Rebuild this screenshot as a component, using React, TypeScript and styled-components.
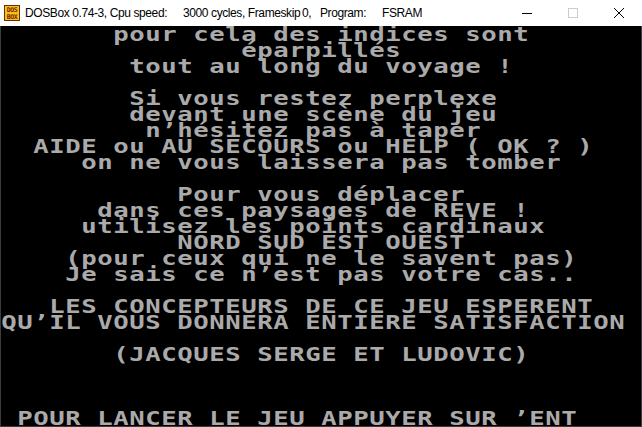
import React from 'react';
import styled, { createGlobalStyle } from 'styled-components';

const GlobalStyle = createGlobalStyle`
  html, body {
    margin: 0;
    padding: 0;
    background: #ffffff;
  }
  body {
    width: 642px;
    height: 427px;
    overflow: hidden;
  }
`;

const Window = styled.div`
  width: 642px;
  height: 427px;
  display: flex;
  flex-direction: column;
  background: #ffffff;
`;

const TitleBar = styled.div`
  height: 26px;
  flex-shrink: 0;
  display: flex;
  align-items: center;
  background: #ffffff;
  font-family: "Liberation Sans", Arial, sans-serif;
  font-size: 12px;
  letter-spacing: -0.4px;
  color: #000000;
`;

const AppIcon = styled.svg`
  flex-shrink: 0;
  margin: 0 5px 0 4px;
`;

const TitleSegment = styled.span<{ $w?: number }>`
  flex-shrink: 0;
  white-space: pre;
  width: ${(p) => (p.$w ? `${p.$w}px` : 'auto')};
`;

const Spacer = styled.div`
  flex: 1;
`;

const ControlButton = styled.div`
  width: 46px;
  height: 26px;
  display: flex;
  align-items: center;
  justify-content: center;
`;

const Screen = styled.div`
  width: 640px;
  height: 400px;
  background: #000000;
  border: 1px solid #3c3c3c;
  border-top: none;
  overflow: hidden;
`;

const Row = styled.div`
  height: 16px;
  display: flex;
`;

const Cell = styled.span`
  width: 16px;
  height: 16px;
  flex-shrink: 0;
  display: inline-block;
  text-align: center;
  line-height: 16px;
  font-family: "DejaVu Sans Mono", "Liberation Mono", monospace;
  font-weight: bold;
  font-size: 19px;
  color: #aaaaaa;
  white-space: pre;
  transform: scaleX(1.35);
`;

// 40x25 text screen, one entry per row: starting column and text
const rows: { col: number; text: string }[] = [
  { col: 7, text: 'pour cela des indices sont' },
  { col: 15, text: 'éparpillés' },
  { col: 8, text: 'tout au long du voyage !' },
  { col: 0, text: '' },
  { col: 8, text: 'Si vous restez perplexe' },
  { col: 8, text: 'devant une scène du jeu' },
  { col: 9, text: 'n’hésitez pas à taper' },
  { col: 2, text: 'AIDE ou AU SECOURS ou HELP ( OK ? )' },
  { col: 5, text: 'on ne vous laissera pas tomber' },
  { col: 0, text: '' },
  { col: 11, text: 'Pour vous déplacer' },
  { col: 6, text: 'dans ces paysages de REVE !' },
  { col: 5, text: 'utilisez les points cardinaux' },
  { col: 11, text: 'NORD SUD EST OUEST' },
  { col: 4, text: '(pour ceux qui ne le savent pas)' },
  { col: 4, text: 'Je sais ce n’est pas votre cas..' },
  { col: 0, text: '' },
  { col: 3, text: 'LES CONCEPTEURS DE CE JEU ESPERENT' },
  { col: 0, text: 'QU’IL VOUS DONNERA ENTIERE SATISFACTION' },
  { col: 0, text: '' },
  { col: 7, text: '(JACQUES SERGE ET LUDOVIC)' },
  { col: 0, text: '' },
  { col: 0, text: '' },
  { col: 0, text: '' },
  { col: 1, text: 'POUR LANCER LE JEU APPUYER SUR ’ENT' },
];

const DosBoxIcon = () => (
  <AppIcon width="16" height="16" viewBox="0 0 16 16">
    <rect x="0.5" y="0.5" width="15" height="15" fill="#f4c21b" stroke="#6b2d00" />
    <text x="8" y="7" textAnchor="middle" fontSize="6.5" fontWeight="bold" fill="#7a1c00" fontFamily="DejaVu Sans Mono, monospace">DOS</text>
    <text x="8" y="14" textAnchor="middle" fontSize="6.5" fontWeight="bold" fill="#7a1c00" fontFamily="DejaVu Sans Mono, monospace">BOX</text>
  </AppIcon>
);

const App = () => {
  return (
    <Window>
      <GlobalStyle />
      <TitleBar>
        <DosBoxIcon />
        <TitleSegment $w={158}>DOSBox 0.74-3, Cpu speed:</TitleSegment>
        <TitleSegment $w={119}>3000 cycles, Frameskip</TitleSegment>
        <TitleSegment $w={18}>0,</TitleSegment>
        <TitleSegment $w={62}>Program:</TitleSegment>
        <TitleSegment>FSRAM</TitleSegment>
        <Spacer />
        <ControlButton>
          <svg width="10" height="10" viewBox="0 0 10 10">
            <path d="M0 5.5h10" stroke="#000" strokeWidth="1" />
          </svg>
        </ControlButton>
        <ControlButton>
          <svg width="10" height="10" viewBox="0 0 10 10">
            <rect x="0.5" y="0.5" width="9" height="9" fill="none" stroke="#cccccc" strokeWidth="1" />
          </svg>
        </ControlButton>
        <ControlButton>
          <svg width="10" height="10" viewBox="0 0 10 10">
            <path d="M0 0L10 10M10 0L0 10" stroke="#000" strokeWidth="1" />
          </svg>
        </ControlButton>
      </TitleBar>
      <Screen>
        {rows.map((r, i) => (
          <Row key={i}>
            {(' '.repeat(r.col) + r.text).split('').map((ch, j) => (
              <Cell key={j}>{ch}</Cell>
            ))}
          </Row>
        ))}
      </Screen>
    </Window>
  );
};

export default App;
